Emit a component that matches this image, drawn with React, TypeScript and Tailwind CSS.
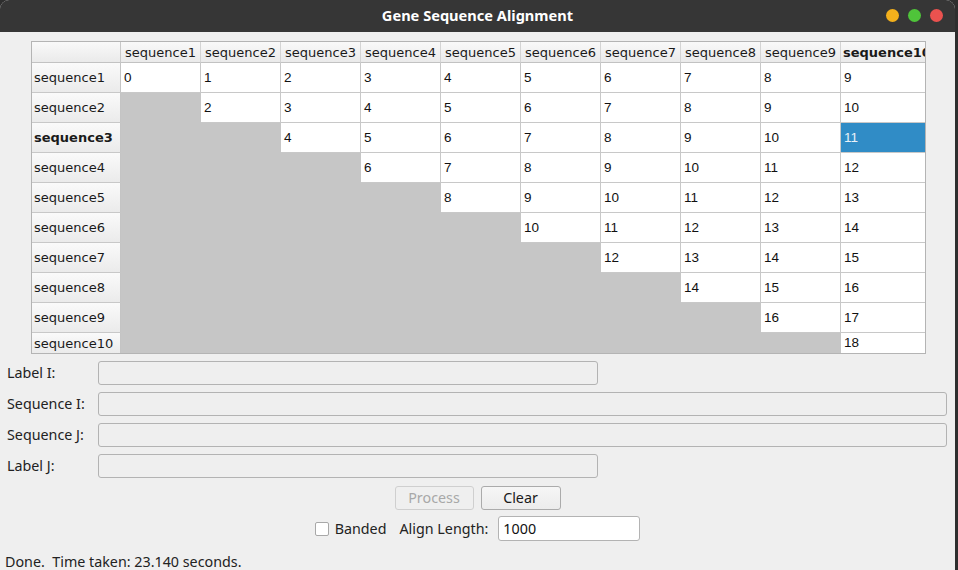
import React from "react";

const N = 10;
const SEL_ROW = 3;
const SEL_COL = 10;

function HeaderCell({ children, bold, last, left }: { children: React.ReactNode; bold?: boolean; last?: boolean; left?: boolean }) {
  return (
    <div
      className={
        "h-[21px] border-b border-b-[#c2c2c2] bg-gradient-to-b from-[#f9f9f9] to-[#eaeaea] flex items-center overflow-hidden whitespace-nowrap text-[13px] text-[#1a1a1a] leading-none " +
        (last ? "" : "border-r border-r-[#d4d4d4] ") +
        (left ? "justify-start pl-[2px] " : "justify-center ") +
        (bold ? "font-bold" : "")
      }
      style={{ fontFamily: '"DejaVu Sans", sans-serif' }}
    >
      {children}
    </div>
  );
}

export default function App() {
  const rows = Array.from({ length: N }, (_, i) => i + 1);
  const cols = Array.from({ length: N }, (_, i) => i + 1);

  return (
    <div className="w-[958px] h-[570px] bg-[#2e2e2e] overflow-hidden">
      <div className="w-[955px] h-[570px] bg-[#efefef] rounded-t-[9px] overflow-hidden flex flex-col">
        {/* Title bar */}
        <div className="h-[32px] bg-[#363636] flex items-center relative shrink-0">
          <div
            className="flex-1 text-center text-white font-bold text-[14.6px]"
            style={{ fontFamily: '"Noto Sans", "DejaVu Sans", sans-serif' }}
          >
            Gene Sequence Alignment
          </div>
          <div className="absolute right-[12px] top-[9px] flex gap-[9px]">
            <div className="w-[13px] h-[13px] rounded-full bg-[#f3b01c]" />
            <div className="w-[13px] h-[13px] rounded-full bg-[#4fc43a]" />
            <div className="w-[13px] h-[13px] rounded-full bg-[#ea524f]" />
          </div>
        </div>

        {/* Body */}
        <div className="flex flex-col flex-1" style={{ fontFamily: '"Noto Sans", sans-serif' }}>
          {/* Table */}
          <div className="pt-[9px] pl-[31px]">
            <div className="w-[895px] h-[313px] border border-[#b4b4b4] overflow-hidden bg-white">
              <div className="grid grid-cols-[89px_repeat(9,80px)_84px] grid-rows-[21px_repeat(9,30px)_20px]">
                {/* corner */}
                <div className="h-[21px] border-b border-r border-b-[#c2c2c2] border-r-[#c8c8c8] bg-gradient-to-b from-[#f9f9f9] to-[#eaeaea]" />
                {cols.map((c) => (
                  <HeaderCell key={c} bold={c === SEL_COL} last={c === N} left={c === N}>
                    sequence{c}
                  </HeaderCell>
                ))}
                {rows.map((r) => (
                  <React.Fragment key={r}>
                    <div
                      className={
                        "border-r border-r-[#c4c4c4] bg-gradient-to-b from-[#fafafa] to-[#ebebeb] flex items-center pl-[2px] text-[13px] text-[#1a1a1a] leading-none whitespace-nowrap overflow-hidden " +
                        (r === N ? "h-[20px] " : "h-[30px] border-b border-b-[#c8c8c8] ") +
                        (r === SEL_ROW ? "font-bold" : "")
                      }
                      style={{ fontFamily: '"DejaVu Sans", sans-serif' }}
                    >
                      sequence{r}
                    </div>
                    {cols.map((c) => {
                      const filled = c >= r;
                      const selected = r === SEL_ROW && c === SEL_COL;
                      const lastRow = r === N;
                      const lastCol = c === N;
                      let cls =
                        "flex items-center pl-[3px] text-[13.5px] leading-none " +
                        (lastRow ? "h-[20px] " : "h-[30px] border-b ") +
                        (lastCol ? "" : "border-r ");
                      if (!filled) {
                        cls += "bg-[#c6c6c6] border-[#c6c6c6] ";
                      } else if (selected) {
                        cls += "bg-[#308cc6] text-[#eaf2f9] border-[#c8c8c8] ";
                      } else {
                        cls += "bg-white text-[#111] border-[#c8c8c8] ";
                      }
                      return (
                        <div
                          key={c}
                          className={cls}
                          style={{ fontFamily: '"Liberation Sans", Arial, sans-serif' }}
                        >
                          {filled ? r + c - 2 : ""}
                        </div>
                      );
                    })}
                  </React.Fragment>
                ))}
              </div>
            </div>
          </div>

          {/* Form */}
          <div className="flex flex-col gap-[7px] mt-[7px] pl-[7px] pr-[8px] text-[14.3px] text-[#222]">
            <div className="flex items-center h-[24px]">
              <div className="w-[91px]">Label I:</div>
              <div className="w-[500px] h-[24px] border border-[#b3b3b3] rounded-[3px] bg-[#efefef]" />
            </div>
            <div className="flex items-center h-[24px]">
              <div className="w-[91px]">Sequence I:</div>
              <div className="flex-1 h-[24px] border border-[#b3b3b3] rounded-[3px] bg-[#efefef]" />
            </div>
            <div className="flex items-center h-[24px]">
              <div className="w-[91px]">Sequence J:</div>
              <div className="flex-1 h-[24px] border border-[#b3b3b3] rounded-[3px] bg-[#efefef]" />
            </div>
            <div className="flex items-center h-[24px]">
              <div className="w-[91px]">Label J:</div>
              <div className="w-[500px] h-[24px] border border-[#b3b3b3] rounded-[3px] bg-[#efefef]" />
            </div>
          </div>

          {/* Buttons */}
          <div className="flex justify-center gap-[7px] mt-[8px] text-[14.3px]">
            <div className="w-[79px] h-[24px] border border-[#cfcfcf] rounded-[3px] bg-[#efefef] text-[#a8a8a8] flex items-center justify-center">
              Process
            </div>
            <div className="w-[80px] h-[24px] border border-[#ababab] rounded-[3px] bg-gradient-to-b from-[#f6f6f6] to-[#ececec] text-[#1a1a1a] flex items-center justify-center">
              Clear
            </div>
          </div>

          {/* Banded row */}
          <div className="flex justify-center items-center mt-[6px] text-[14.3px] text-[#222]">
            <div className="w-[14px] h-[14px] border border-[#a8a8a8] rounded-[2px] bg-white" />
            <div className="ml-[6px]">Banded</div>
            <div className="ml-[13px]">Align Length:</div>
            <div className="ml-[10px] w-[142px] h-[25px] border border-[#b3b3b3] rounded-[3px] bg-white flex items-center pl-[4px] text-[#111]">
              1000
            </div>
          </div>

          {/* Status */}
          <div className="mt-[10px] pl-[5px] text-[14.3px] text-[#222]">Done.&nbsp; Time taken: 23.140 seconds.</div>
        </div>
      </div>
    </div>
  );
}
